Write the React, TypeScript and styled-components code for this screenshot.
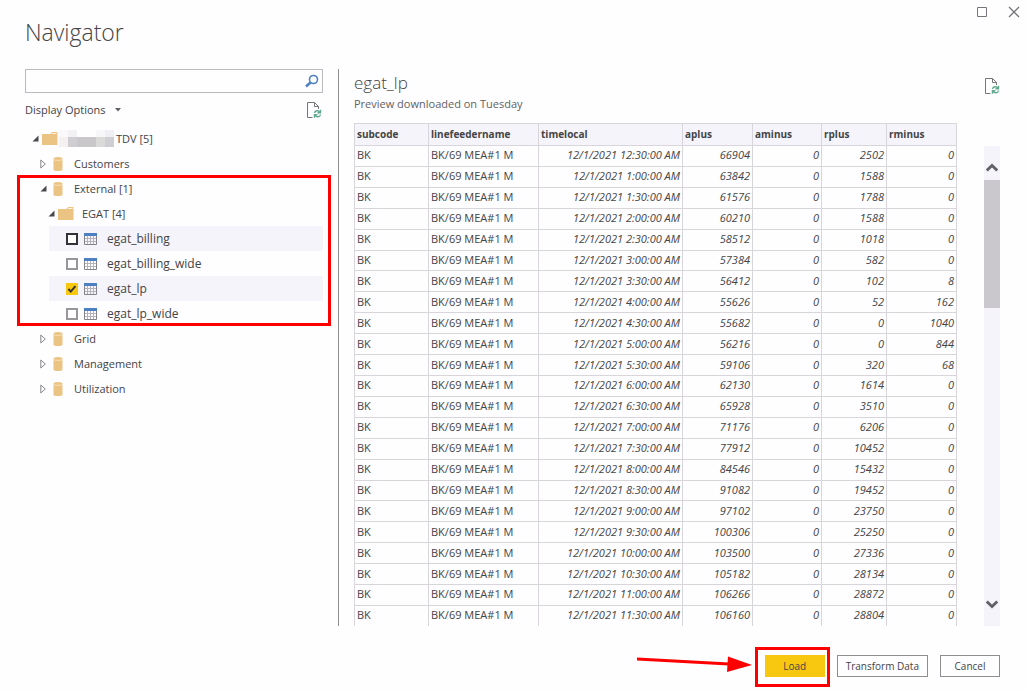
import React from "react";
import styled, { createGlobalStyle } from "styled-components";

const GlobalStyle = createGlobalStyle`
  *, *::before, *::after { box-sizing: border-box; }
  body {
    margin: 0;
    background: #fefdff;
    color: #444;
    font-family: "Open Sans", "Noto Sans", sans-serif;
    font-size: 11px;
    line-height: 16px;
  }
  button { font: inherit; color: inherit; }
`;

const Dialog = styled.main`
  min-height: 100vh;
  display: flex;
  flex-direction: column;
  padding: 0 27px 13px 25px;
`;

const TitleBar = styled.header`
  height: 69px;
  display: flex;
  justify-content: space-between;
  align-items: flex-start;
`;

const Title = styled.h1`
  margin: 0;
  padding-top: 17px;
  font-size: 23px;
  line-height: 30px;
  font-weight: 300;
`;

const IconButton = styled.button`
  display: flex;
  padding: 0;
  border: 0;
  background: none;
`;

const WindowButtons = styled.div`
  display: flex;
  gap: 20px;
  padding-top: 6px;
  margin-right: -20px;
`;

const Body = styled.div`
  flex: 1;
  display: flex;
`;

const Sidebar = styled.section`
  flex: 0 0 314px;
  padding-right: 15px;
  border-right: 1px solid #8f8d91;
`;

const SearchBox = styled.label`
  height: 24px;
  display: flex;
  align-items: center;
  padding-right: 3px;
  border: 1px solid #bbbabf;
`;

const SearchInput = styled.input`
  flex: 1;
  min-width: 0;
  border: 0;
  outline: 0;
  background: none;
  font: inherit;
`;

const OptionsRow = styled.div`
  height: 33px;
  display: flex;
  justify-content: space-between;
  align-items: center;
  padding-right: 1px;
`;

const OptionsButton = styled(IconButton)`
  align-items: center;
  gap: 9px;
`;

const TreeList = styled.ul`
  margin: 0;
  padding: 0;
  list-style: none;
`;

const Branch = styled.li`
  position: relative;
`;

const TreeRow = styled.div<{ $level: number }>`
  height: 25px;
  display: flex;
  align-items: center;
  padding-left: ${(p) => 7 + p.$level * 8}px;
`;

const Toggle = styled(IconButton)`
  width: 10px;
`;

const IconSlot = styled.span<{ $tight?: boolean }>`
  width: 16px;
  margin-right: ${(p) => (p.$tight ? 1 : 8)}px;
  display: flex;
  justify-content: center;
`;

const TableItem = styled.label<{ $shaded?: boolean }>`
  height: 25px;
  margin-left: 24px;
  padding-left: 17px;
  display: flex;
  align-items: center;
  font-size: 12px;
  background: ${(p) => (p.$shaded ? "#f6f4fb" : "none")};
`;

const Check = styled.input<{ $focused?: boolean }>`
  appearance: none;
  width: 12px;
  height: 12px;
  margin: 0 6px 0 0;
  border: 2px solid ${(p) => (p.$focused ? "#333238" : "#98969b")};
  background: #fefdff;
  &:checked {
    border: 0;
    background: #f7c80f
      url("data:image/svg+xml,%3Csvg xmlns='http://www.w3.org/2000/svg' viewBox='0 0 12 12'%3E%3Cpath d='M2.4 6l2.4 2.6 4.6-5.4' fill='none' stroke='%23333' stroke-width='2'/%3E%3C/svg%3E");
  }
`;

const ItemName = styled.span`
  margin-left: 10px;
`;

const Highlight = styled.div`
  position: absolute;
  inset: -1px -8px 0 -8px;
  border: 3px solid #fe0000;
  pointer-events: none;
`;

const Preview = styled.section`
  flex: 1;
  min-width: 0;
  display: flex;
  flex-direction: column;
  padding-left: 15px;
`;

const PreviewHeader = styled.div`
  height: 54px;
  display: flex;
  justify-content: space-between;
  align-items: flex-start;
`;

const PreviewTitle = styled.h2`
  margin: 0;
  padding: 2px 0 1px;
  font-size: 17px;
  line-height: 24px;
  font-weight: 300;
`;

const PreviewNote = styled.p`
  margin: 0;
  color: #626164;
`;

const RefreshSlot = styled.div`
  padding-top: 8px;
`;

const GridArea = styled.div`
  flex: 1;
  display: flex;
  gap: 27px;
`;

const DataTable = styled.table`
  flex: 1;
  min-width: 0;
  table-layout: fixed;
  border-collapse: collapse;
  line-height: 14px;
  th, td {
    border: 1px solid #d8d6db;
    padding: 0 2px 1px;
    white-space: nowrap;
  }
  tbody tr:last-child td { border-bottom: 0; }
`;

const HeadCell = styled.th`
  height: 22px;
  text-align: left;
  font-size: 10px;
  font-weight: 700;
  background: #f6f4fb;
`;

const Cell = styled.td<{ $numeric?: boolean }>`
  text-align: ${(p) => (p.$numeric ? "right" : "left")};
  font-style: ${(p) => (p.$numeric ? "italic" : "normal")};
`;

const ScrollBar = styled.div`
  width: 16px;
  margin-top: 23px;
  display: flex;
  flex-direction: column;
  background: #f6f4fb;
`;

const ScrollArrow = styled(IconButton)<{ $down?: boolean }>`
  height: 34px;
  padding: 8px 0;
  align-items: ${(p) => (p.$down ? "flex-start" : "flex-end")};
  justify-content: center;
`;

const ScrollTrack = styled.div`
  flex: 1;
`;

const ScrollThumb = styled.div`
  height: 31%;
  background: #cac8cd;
`;

const Footer = styled.footer`
  display: flex;
  justify-content: flex-end;
  gap: 12px;
  padding-top: 29px;
`;

const Action = styled.button<{ $primary?: boolean }>`
  height: 22px;
  min-width: 60px;
  padding: 0 8px;
  font-size: 10px;
  line-height: 14px;
  border: 1px solid ${(p) => (p.$primary ? "#f7c80f" : "#8f8d91")};
  background: ${(p) => (p.$primary ? "#f7c80f" : "#fefdff")};
`;

const LoadSlot = styled.div`
  position: relative;
`;

const LoadHighlight = styled.div`
  position: absolute;
  inset: -8px -5px -10px -10px;
  border: 3px solid #fe0000;
  pointer-events: none;
`;

const Arrow = styled.svg`
  position: absolute;
  right: 73px;
  top: 0;
  pointer-events: none;
`;

const RefreshIcon = () => (
  <svg width="16" height="18" viewBox="0 0 16 18" fill="none">
    <path d="M6.500 16.500h-5v-15h7l4 4v2.500M8.500 1.500v4h4" stroke="#77757a" />
    <path d="M8.500 12c.5-2.800 4-3 5.500-.8M14.500 8.800v3h-3M14.500 13.500c-.5 2.800-4 3-5.500.8M8.500 16.800v-3h3" stroke="#5fa98c" strokeWidth="1.400" />
  </svg>
);

const FolderIcon = () => (
  <svg width="16" height="13" viewBox="0 0 16 13">
    <path d="M0 2h8.500l1.500-2h5.500v13H0z" fill="#ebc382" />
    <path d="M10 1.500h4.500" stroke="#fff3dc" />
  </svg>
);

const DatabaseIcon = () => (
  <svg width="10" height="14" viewBox="0 0 10 14">
    <path d="M.5 2.500v10c0 2 9 2 9 0v-10z" fill="#ebc382" />
    <ellipse cx="5" cy="1.700" rx="4.500" ry="1.600" fill="#ebc382" />
    <path d="M.5 2.300c1 1.400 8 1.400 9 0" fill="none" stroke="#f8e3bd" />
  </svg>
);

const TableIcon = () => (
  <svg width="13" height="12" viewBox="0 0 13 12">
    <path d="M3.500 3v8M6.500 3v8M9.500 3v8M1 5.500h11M1 8.500h11" stroke="#b5b3b8" />
    <path d="M.5 3v8.500h12V3" fill="none" stroke="#85838a" />
    <path d="M0 0h13v3H0z" fill="#4c80c0" />
  </svg>
);

const ExpandedIcon = () => (
  <svg width="7" height="7" viewBox="0 0 7 7"><path d="M6.500 .5v6H.5z" fill="#4a484d" /></svg>
);

const CollapsedIcon = () => (
  <svg width="7" height="10" viewBox="0 0 7 10">
    <path d="M.8 1v8L5.300 5z" fill="none" stroke="#88868b" />
  </svg>
);

const RedactedName = () => (
  <svg width="57" height="18" viewBox="0 0 57 18" shapeRendering="crispEdges">
    <path d="M0 0h9v7H0z" fill="#faf8fb" />
    <path d="M9 0h9v7H9z" fill="#f2f1f4" />
    <path d="M37 0h9v7h-9z" fill="#f7f6f8" />
    <path d="M46 0h9v7h-9z" fill="#f0eff3" />
    <path d="M0 7h9v10H0z" fill="#f6f1f1" />
    <path d="M9 7h9v10H9z" fill="#cfcdd2" />
    <path d="M18 7h19v10H18z" fill="#c9c7c9" />
    <path d="M37 7h9v10h-9z" fill="#dadad9" />
    <path d="M46 7h9v10h-9z" fill="#cfced3" />
  </svg>
);

const Chevron = ({ down }: { down?: boolean }) => (
  <svg width="12" height="9" viewBox="0 0 12 9">
    <path d={down ? "M.8 1.500L6 6.500l5.200-5" : "M.8 7.500L6 2.500l5.200 5"} fill="none" stroke="#626065" strokeWidth="2.800" />
  </svg>
);

const tables = [
  { name: "egat_billing", shaded: true, focused: true },
  { name: "egat_billing_wide" },
  { name: "egat_lp", shaded: true, checked: true },
  { name: "egat_lp_wide" },
];

const columns: [string, number][] = [
  ["subcode", 74],
  ["linefeedername", 110],
  ["timelocal", 144],
  ["aplus", 70],
  ["aminus", 69],
  ["rplus", 65],
  ["rminus", 70],
];

const readings: [string, number, number, number][] = [
  ["12:30:00", 66904, 2502, 0],
  ["1:00:00", 63842, 1588, 0],
  ["1:30:00", 61576, 1788, 0],
  ["2:00:00", 60210, 1588, 0],
  ["2:30:00", 58512, 1018, 0],
  ["3:00:00", 57384, 582, 0],
  ["3:30:00", 56412, 102, 8],
  ["4:00:00", 55626, 52, 162],
  ["4:30:00", 55682, 0, 1040],
  ["5:00:00", 56216, 0, 844],
  ["5:30:00", 59106, 320, 68],
  ["6:00:00", 62130, 1614, 0],
  ["6:30:00", 65928, 3510, 0],
  ["7:00:00", 71176, 6206, 0],
  ["7:30:00", 77912, 10452, 0],
  ["8:00:00", 84546, 15432, 0],
  ["8:30:00", 91082, 19452, 0],
  ["9:00:00", 97102, 23750, 0],
  ["9:30:00", 100306, 25250, 0],
  ["10:00:00", 103500, 27336, 0],
  ["10:30:00", 105182, 28134, 0],
  ["11:00:00", 106266, 28872, 0],
  ["11:30:00", 106160, 28804, 0],
];

const Database = ({ name, open }: { name: string; open?: boolean }) => (
  <TreeRow $level={1}>
    <Toggle aria-label={`Toggle ${name}`}>{open ? <ExpandedIcon /> : <CollapsedIcon />}</Toggle>
    <IconSlot><DatabaseIcon /></IconSlot>
    <span>{name}</span>
  </TreeRow>
);

export default function App() {
  return (
    <>
      <GlobalStyle />
      <Dialog>
        <TitleBar>
          <Title>Navigator</Title>
          <WindowButtons>
            <IconButton aria-label="Maximize">
              <svg width="12" height="12" viewBox="0 0 12 12"><path d="M1.500 1.500h9v9h-9z" fill="none" stroke="#77757a" /></svg>
            </IconButton>
            <IconButton aria-label="Close">
              <svg width="12" height="12" viewBox="0 0 12 12"><path d="M1 1l10 10M11 1L1 11" stroke="#77757a" strokeWidth="1.300" /></svg>
            </IconButton>
          </WindowButtons>
        </TitleBar>
        <Body>
          <Sidebar>
            <SearchBox>
              <SearchInput type="text" aria-label="Search" />
              <svg width="14" height="14" viewBox="0 0 14 14" fill="none" stroke="#4c80c0">
                <circle cx="8.500" cy="5.500" r="4" strokeWidth="1.600" />
                <path d="M5.500 8.500L1 12.500" strokeWidth="2.400" />
              </svg>
            </SearchBox>
            <OptionsRow>
              <OptionsButton>
                Display Options
                <svg width="6" height="4" viewBox="0 0 6 4"><path d="M0 0h6L3 3.500z" fill="#626065" /></svg>
              </OptionsButton>
              <IconButton aria-label="Refresh"><RefreshIcon /></IconButton>
            </OptionsRow>
            <TreeList>
              <Branch>
                <TreeRow $level={0}>
                  <Toggle aria-label="Toggle TDV"><ExpandedIcon /></Toggle>
                  <IconSlot $tight><FolderIcon /></IconSlot>
                  <RedactedName />
                  <span>TDV [5]</span>
                </TreeRow>
                <TreeList>
                  <Branch><Database name="Customers" /></Branch>
                  <Branch>
                    <Database name="External [1]" open />
                    <TreeList>
                      <Branch>
                        <TreeRow $level={2}>
                          <Toggle aria-label="Toggle EGAT"><ExpandedIcon /></Toggle>
                          <IconSlot><FolderIcon /></IconSlot>
                          <span>EGAT [4]</span>
                        </TreeRow>
                        {tables.map((t) => (
                          <TableItem key={t.name} $shaded={t.shaded}>
                            <Check type="checkbox" defaultChecked={t.checked} $focused={t.focused} />
                            <TableIcon />
                            <ItemName>{t.name}</ItemName>
                          </TableItem>
                        ))}
                      </Branch>
                    </TreeList>
                    <Highlight />
                  </Branch>
                  <Branch><Database name="Grid" /></Branch>
                  <Branch><Database name="Management" /></Branch>
                  <Branch><Database name="Utilization" /></Branch>
                </TreeList>
              </Branch>
            </TreeList>
          </Sidebar>
          <Preview>
            <PreviewHeader>
              <div>
                <PreviewTitle>egat_lp</PreviewTitle>
                <PreviewNote>Preview downloaded on Tuesday</PreviewNote>
              </div>
              <RefreshSlot>
                <IconButton aria-label="Refresh preview"><RefreshIcon /></IconButton>
              </RefreshSlot>
            </PreviewHeader>
            <GridArea>
              <DataTable>
                <colgroup>
                  {columns.map(([name, width]) => <col key={name} width={width} />)}
                </colgroup>
                <thead>
                  <tr>{columns.map(([name]) => <HeadCell key={name} scope="col">{name}</HeadCell>)}</tr>
                </thead>
                <tbody>
                  {readings.map(([time, aplus, rplus, rminus]) => (
                    <tr key={time}>
                      <Cell>BK</Cell>
                      <Cell>BK/69 MEA#1 M</Cell>
                      <Cell $numeric>12/1/2021 {time} AM</Cell>
                      <Cell $numeric>{aplus}</Cell>
                      <Cell $numeric>0</Cell>
                      <Cell $numeric>{rplus}</Cell>
                      <Cell $numeric>{rminus}</Cell>
                    </tr>
                  ))}
                </tbody>
              </DataTable>
              <ScrollBar>
                <ScrollArrow aria-label="Scroll up"><Chevron /></ScrollArrow>
                <ScrollTrack><ScrollThumb /></ScrollTrack>
                <ScrollArrow $down aria-label="Scroll down"><Chevron down /></ScrollArrow>
              </ScrollBar>
            </GridArea>
          </Preview>
        </Body>
        <Footer>
          <LoadSlot>
            <Action $primary>Load</Action>
            <LoadHighlight />
            <Arrow width="115" height="20" viewBox="0 0 115 20">
              <path d="M0 4l92 5" stroke="#fe0000" strokeWidth="3" />
              <path d="M91 1.500L115 10 90 17z" fill="#fe0000" />
            </Arrow>
          </LoadSlot>
          <Action>Transform Data</Action>
          <Action>Cancel</Action>
        </Footer>
      </Dialog>
    </>
  );
}
